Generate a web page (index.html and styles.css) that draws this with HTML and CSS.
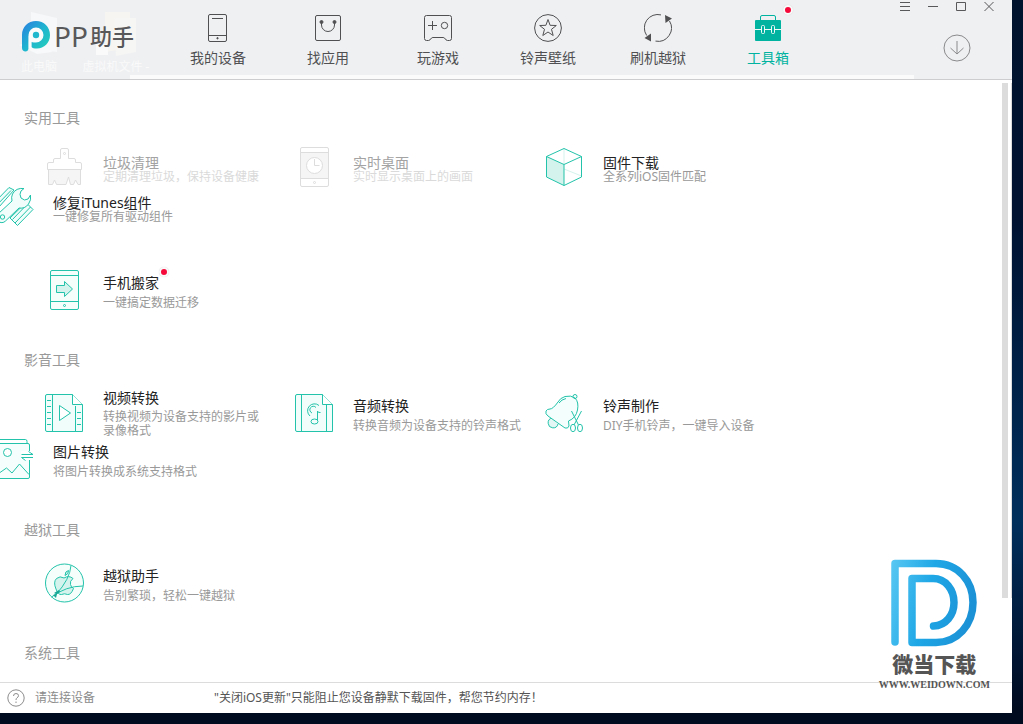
FILE: index.html
```html
<!DOCTYPE html>
<html lang="zh-CN">
<head>
<meta charset="utf-8">
<meta name="viewport" content="width=device-width, initial-scale=1">
<title>PP助手</title>
<link rel="stylesheet" href="styles.css">
</head>
<body>
<div class="window">
  <header class="header">
    <div class="ghost-desktop" aria-hidden="true">
      <div class="ghost-item ghost-computer">
        <svg width="40" height="46" viewBox="0 0 40 46"><path d="M12 0 L38 6 V40 L12 36 Z" fill="#f6f8fa"/><path d="M0 33 L14 28 L34 40 L18 42 Z" fill="#f8f9fa"/></svg>
        <span>此电脑</span>
      </div>
      <div class="ghost-item ghost-files">
        <svg width="40" height="46" viewBox="0 0 40 46"><path d="M9 0 H34 V36 L9 40 Z" fill="#f7f5f1"/><path d="M18 6 H40 V40 L20 44 Z" fill="#f6f6f4"/><path d="M0 32 H12 V43 H0 Z" fill="#fafafa"/></svg>
        <span>虚拟机文件 -</span>
      </div>
      <div class="ghost-strip"></div>
    </div>
    <div class="logo">
      <svg class="logo-mark" width="28" height="31" viewBox="0 0 28 31">
        <defs><linearGradient id="lg" x1="0" y1="0" x2="1" y2="1"><stop offset="0" stop-color="#2a7de0"/><stop offset=".5" stop-color="#1fb4d0"/><stop offset="1" stop-color="#25d3b4"/></linearGradient></defs>
        <circle cx="14" cy="14" r="7.500" fill="#fafcfc"/>
        <path fill="url(#lg)" d="M0 14 C0 6 6 0 14 0 C22 0 28 6 28 14 C28 22 22 27.500 15 27.500 C12 27.500 10.500 27 9.500 26 V21 C11 21.500 12 21.500 14 21.500 A7.500 7.500 0 1 0 6.500 14 V27 C6.500 29.500 5 30.500 3.500 30.500 C1.500 30.500 0 29 0 27 Z"/>
        <path d="M8 15V27" stroke="#fafcfc" stroke-width="2.500"/>
        <circle cx="14" cy="14" r="3.200" fill="#20b8cc"/>
      </svg>
      <span class="logo-pp">PP</span><span class="logo-cn">助手</span>
    </div>
    <nav class="nav">
      <button class="nav-item" type="button">
        <svg class="nav-icon" viewBox="0 0 28 28"><rect x="4.500" y=".5" width="18" height="27" rx="1.500"/><path d="M8 4.500H19M4.500 21.500H22.500"/><circle cx="13.500" cy="24.200" r=".7" fill="currentColor"/></svg>
        <span>我的设备</span>
      </button>
      <button class="nav-item" type="button">
        <svg class="nav-icon" viewBox="0 0 28 28"><rect x="1.500" y="1.500" width="25" height="25" rx="1.500"/><path d="M7.500 8V11a6.500 6.500 0 0 0 13 0V8"/><circle cx="7.500" cy="8" r="1.500" fill="currentColor"/><circle cx="20.500" cy="8" r="1.500" fill="currentColor"/></svg>
        <span>找应用</span>
      </button>
      <button class="nav-item" type="button">
        <svg class="nav-icon" viewBox="0 0 28 28"><path d="M2.500 1.500H25.500Q27.500 1.500 27.500 3.500V24.500Q27.500 26.500 25.500 26.500H23.500Q22 26.500 20.500 24Q20 23.500 19 23.500H9Q8 23.500 7.500 24Q6 26.500 4.500 26.500H2.500Q.5 26.500 .5 24.500V3.500Q.5 1.500 2.500 1.500ZM8.500 7V16M4 11.500H13"/><circle cx="20.500" cy="11.500" r="3.200"/></svg>
        <span>玩游戏</span>
      </button>
      <button class="nav-item" type="button">
        <svg class="nav-icon" viewBox="0 0 28 28"><circle cx="14" cy="14" r="13.400"/><path d="M14 5.500L16.100 11.300L22.300 11.500L17.500 15.300L19.200 21.500L14 18L8.800 21.500L10.500 15.300L5.700 11.500L11.900 11.300Z"/></svg>
        <span>铃声壁纸</span>
      </button>
      <button class="nav-item" type="button">
        <svg class="nav-icon" viewBox="0 0 28 28"><path d="M17 .9A13.400 13.400 0 0 0 2.700 21.500M11.500 27.100A13.400 13.400 0 0 0 25.500 7"/><path d="M21 1L28 4.500L21.500 9ZM.5 24L7 19.500V27.500Z" fill="currentColor" stroke="none"/></svg>
        <span>刷机越狱</span>
      </button>
      <button class="nav-item nav-item-active" type="button">
        <svg class="nav-icon" viewBox="0 0 28 28"><path d="M6.500 7V3Q6.500 1.500 8 1.500H20Q21.500 1.500 21.500 3V7"/><rect x="1" y="6" width="26" height="21" rx="1" fill="currentColor" stroke="none"/><g stroke="#f0f8f7"><path d="M1 15.500H7.500M10.500 15.500H17.500M20.500 15.500H27"/><rect x="7.500" y="11.500" width="3" height="8" rx="1"/><rect x="17.500" y="11.500" width="3" height="8" rx="1"/></g></svg>
        <span>工具箱</span>
        <i class="dot nav-dot"></i>
      </button>
    </nav>
    <div class="header-side">
      <div class="window-controls">
        <button type="button" aria-label="菜单"><svg viewBox="0 0 14 14"><path d="M2 2.500H12M2 6.500H12M2 10.500H12"/></svg></button>
        <button type="button" aria-label="最小化"><svg viewBox="0 0 14 14"><path d="M2 6.500H12"/></svg></button>
        <button type="button" aria-label="最大化"><svg viewBox="0 0 14 14"><path d="M2.500 2.500H11.500V10.500H2.500Z"/></svg></button>
        <button type="button" aria-label="关闭"><svg viewBox="0 0 14 14"><path d="M2.500 2L11.500 11M11.500 2L2.500 11"/></svg></button>
      </div>
      <button class="download" type="button" aria-label="下载"><svg viewBox="0 0 28 28"><circle cx="14" cy="14" r="13"/><path d="M14 7V20M7.500 14L14 20L20.500 14"/></svg></button>
    </div>
  </header>

  <main class="main">
    <div class="sections">
      <section>
        <h2>实用工具</h2>
        <div class="tools">
          <button class="tool tool-compact" type="button" disabled>
            <svg class="tool-icon gray" viewBox="0 0 40 40"><path d="M4.500 22V37.500H8.500L10.500 33L12.500 37.500H22L24.500 30L26.500 37.500H29.500L31.500 33L34 37.500H36.500V22Z" fill="#f5f5f5"/><path d="M3.500 22.500V17Q3.500 15.500 5 15.500H9.500V13Q9.500 11.500 11 11.500H16.500V3Q16.500 1.500 18 1.500H23Q24.500 1.500 24.500 3V11.500H30Q31.500 11.500 31.500 13V15.500H36Q37.500 15.500 37.500 17V22.500Z" fill="#fff"/><circle cx="20.500" cy="6.500" r="1"/></svg>
            <span class="tool-text"><span class="tool-name">垃圾清理</span><span class="tool-desc">定期清理垃圾，保持设备健康</span></span>
          </button>
          <button class="tool tool-compact" type="button" disabled>
            <svg class="tool-icon gray" viewBox="0 0 40 40"><rect x="6.500" y=".5" width="28" height="39" rx="1.500" fill="#fff"/><path d="M6.500 5.500H34.500V31.500H6.500Z" fill="#f5f5f5"/><circle cx="20.500" cy="18.500" r="8" fill="#fff"/><path d="M20.500 12V18.500H25.500"/><circle cx="20.500" cy="35.500" r="1"/></svg>
            <span class="tool-text"><span class="tool-name">实时桌面</span><span class="tool-desc">实时显示桌面上的画面</span></span>
          </button>
          <button class="tool tool-compact" type="button">
            <svg class="tool-icon" viewBox="0 0 40 40"><path d="M2.500 9.500L20 17.500V38.500L2.500 30Z" fill="#d4f3ec" stroke="none"/><path d="M20 1.500V17M20 22L37.500 29" stroke="#d4f3ec"/><path d="M2.500 9.500L20 1.500L37.500 9.500V30L20 38.500L2.500 30ZL20 17.500V38.500M20 17.500L37.500 9.500"/></svg>
            <span class="tool-text"><span class="tool-name">固件下载</span><span class="tool-desc">全系列iOS固件匹配</span></span>
          </button>
          <button class="tool tool-compact tool-outdent" type="button">
            <svg class="tool-icon" viewBox="0 0 40 40"><path d="M-1 17L15 .5L20 3L5 20M-1 22L17 3.500" fill="#f1fdfa"/><path d="M34 17.500L39 22.500L23.500 38.500L16 31L30.500 17" fill="#f1fdfa"/><path d="M36.500 20L21 36M31 19.500L18.500 32.500"/><path d="M30 1.500Q22 .5 18.500 7Q17 10 18 14L4 27A5 5 0 1 0 11.500 34L25 21Q31 22 34.500 17Q37.500 13 36.500 8L34 12Q30.500 14.500 27 11Q25 7 27 4Z" fill="#f1fdfa"/><circle cx="8.500" cy="30" r="2.200"/></svg>
            <span class="tool-text"><span class="tool-name">修复iTunes组件</span><span class="tool-desc">一键修复所有驱动组件</span></span>
          </button>
          <button class="tool tool-separate" type="button">
            <svg class="tool-icon" viewBox="0 0 40 40"><rect x="6.500" y=".5" width="28" height="39" rx="1.500" fill="#f6fefc"/><path d="M6.500 5.500H34.500M6.500 31.500H34.500"/><path d="M12.500 15.500H20.500V11.500L28.500 19L20.500 26.500V22.500H12.500Z" fill="#d4f3ec"/><circle cx="20.500" cy="35.500" r="1"/></svg>
            <span class="tool-text"><span class="tool-name">手机搬家<i class="dot name-dot"></i></span><span class="tool-desc">一键搞定数据迁移</span></span>
          </button>
        </div>
      </section>
      <section>
        <h2>影音工具</h2>
        <div class="tools">
          <button class="tool tool-wrapped" type="button">
            <svg class="tool-icon" viewBox="0 0 40 40"><path d="M3 1.500H28.500L38.500 11.500V38.500H3Q1.500 38.500 1.500 37V3Q1.500 1.500 3 1.500Z" fill="#f1fdfa"/><path d="M28.500 1.500V11.500H38.500" fill="#fff"/><path d="M8.500 1.500V38.500M31.500 13V38.500M3 7.500H7M3 13.500H7M3 19.500H7M3 25.500H7M3 31.500H7M33 19.500H37M33 25.500H37M33 31.500H37"/><path d="M15.500 12.500V27.500L26.500 20Z" fill="#fff"/></svg>
            <span class="tool-text"><span class="tool-name">视频转换</span><span class="tool-desc">转换视频为设备支持的影片或录像格式</span></span>
          </button>
          <button class="tool" type="button">
            <svg class="tool-icon" viewBox="0 0 40 40"><path d="M3 1.500H28.500L38.500 11.500V38.500H3Q1.500 38.500 1.500 37V3Q1.500 1.500 3 1.500Z" fill="#f1fdfa"/><path d="M28.500 1.500V11.500H38.500" fill="#fff"/><path d="M7.500 1.500V38.500M32.500 12V38.500"/><path d="M16 23A6.500 6.500 0 1 1 25 12.500M18 20A3.500 3.500 0 1 1 22 14.500M23.500 28V18Q24 20 26.500 19.500"/><ellipse cx="20.500" cy="28.500" rx="3.500" ry="2.500"/></svg>
            <span class="tool-text"><span class="tool-name">音频转换</span><span class="tool-desc">转换音频为设备支持的铃声格式</span></span>
          </button>
          <button class="tool" type="button">
            <svg class="tool-icon" viewBox="0 0 40 40"><path d="M8 25A5 5 0 1 0 14 31" fill="#e3f8f4"/><path d="M2 18Q1 21 4 23L21 35Q24 36 25 33L24.500 28Q32 25 33.500 17Q35 9 31 5Q27 2 21 3.500Q16 5 14 9Q9 16 6 16Q3 16 2 18Z" fill="#f4fefc"/><circle cx="31" cy="3.500" r="2"/><path d="M15 10Q17.500 6.500 22 5.500M27.500 18L34.500 32M37.500 18L30 32"/><ellipse cx="29" cy="35" rx="2.500" ry="3.700" fill="#fff"/><ellipse cx="36" cy="35" rx="2.500" ry="3.700" fill="#fff"/></svg>
            <span class="tool-text"><span class="tool-name">铃声制作</span><span class="tool-desc">DIY手机铃声，一键导入设备</span></span>
          </button>
          <button class="tool tool-outdent" type="button">
            <svg class="tool-icon" viewBox="0 0 40 40"><path d="M0 4.500H34Q35.500 4.500 35.500 6V38Q35.500 39.500 34 39.500H0" fill="#f5fefc"/><path d="M0 .5H31.500Q33 .5 33 2.500V4.500"/><circle cx="13.500" cy="13.500" r="4" fill="#fff"/><path d="M1 37L12.500 29L18 34L25.500 25L35 35.500"/><path d="M27 12H41V21H27Z" fill="#fff" stroke="none"/><path d="M27.500 15.500H39L34.500 12.500M39 18.500H27.500L31.500 21.500"/></svg>
            <span class="tool-text"><span class="tool-name">图片转换</span><span class="tool-desc">将图片转换成系统支持格式</span></span>
          </button>
        </div>
      </section>
      <section>
        <h2>越狱工具</h2>
        <div class="tools">
          <button class="tool" type="button">
            <svg class="tool-icon" viewBox="0 0 40 40"><circle cx="20.500" cy="20" r="19" fill="#f6fefc"/><path d="M20 15Q25 12 29 15.500Q25.500 18 26.500 21.500Q27 24 29.500 25.500Q27 32 23.500 31.500Q20.500 30 17.500 31.500Q14 32 12 26Q9 19 12.500 15.500Q16 12.500 20 15ZM21 12.500Q21 8 24.500 7.500Q25 11 21 12.500Z" fill="#d4f3ec"/><path d="M27 2.500Q26 16 12 31.500M39 23Q22 23 7.500 34"/><path d="M15 27L10 30L12 31L9 32L12 35L13 31L16 29Z" fill="#16a795" stroke="none"/></svg>
            <span class="tool-text"><span class="tool-name">越狱助手</span><span class="tool-desc">告别繁琐，轻松一键越狱</span></span>
          </button>
        </div>
      </section>
      <section>
        <h2>系统工具</h2>
      </section>
    </div>
    <div class="scrollbar" aria-hidden="true"><div class="thumb"></div><div class="edge"></div></div>
  </main>

  <footer class="footer">
    <div class="status">
      <svg width="18" height="18" viewBox="0 0 18 18" fill="none" stroke="#8c8c8c"><circle cx="9" cy="9" r="8.200"/><path d="M6.500 7Q6.500 4.500 9 4.500Q11.500 4.500 11.500 6.700Q11.500 8 10 8.800Q9 9.500 9 11M9 12.500V14"/></svg>
      <span>请连接设备</span>
    </div>
    <p class="tip">"关闭iOS更新"只能阻止您设备静默下载固件，帮您节约内存！</p>
  </footer>
</div>

<div class="watermark">
  <svg width="88" height="88" viewBox="0 0 88 88" fill="none" stroke="url(#wm)" stroke-width="7.500" stroke-linecap="round" stroke-linejoin="round">
    <defs><linearGradient id="wm" gradientUnits="userSpaceOnUse" x1="0" y1="0" x2="88" y2="20"><stop offset="0" stop-color="#5bc9f3"/><stop offset=".5" stop-color="#1ea7e6"/><stop offset="1" stop-color="#1c92d6"/></linearGradient></defs>
    <path d="M5 83V4.500H46C68 4.500 83 22 83 43.500C83 66 67 83.500 46 83.500H22V19.500H43C56 19.500 64 31 64 43.500C64 56 56 66.500 43.500 67"/>
  </svg>
  <strong>微当下载</strong>
  <span>WWW.WEIDOWN.COM</span>
</div>
</body>
</html>
```

FILE: styles.css
```css
* {
  box-sizing: border-box;
}

body {
  position: relative;
  display: flex;
  min-height: 100vh;
  margin: 0;
  padding: 0 11px 11px 0;
  overflow-x: hidden;
  background: linear-gradient(#00132e 0%, #001230 30%, #002f5c 72%, #00132f 92%, #000b1f 98%);
  color: #222;
  font: 12px/14px "Noto Sans", "Noto Sans CJK SC", sans-serif;
}

button {
  margin: 0;
  padding: 0;
  border: 0;
  background: none;
  color: inherit;
  font: inherit;
}

svg {
  display: block;
  flex: none;
}

.window {
  display: flex;
  flex: 1;
  flex-direction: column;
  min-width: 0;
  background: #fff;
}

/* Header */
.header {
  position: relative;
  display: flex;
  height: 80px;
  border-bottom: 1px solid #cdcdcf;
  background: #eff0f2;
}

.ghost-desktop {
  position: absolute;
  inset: 0;
  overflow: hidden;
}

.ghost-item {
  position: absolute;
  top: 12px;
  display: flex;
  flex-direction: column;
  align-items: center;
  gap: 2px;
  width: 80px;
  color: #fafafa;
  white-space: nowrap;
}

.ghost-computer {
  left: -1px;
}

.ghost-files {
  left: 76px;
}

.ghost-strip {
  position: absolute;
  right: 98px;
  bottom: 0;
  left: 130px;
  height: 4px;
  background: #fbfbfb;
}

.logo {
  position: relative;
  display: flex;
  flex: none;
  align-items: center;
  width: 163px;
  height: 72px;
  padding-left: 22px;
  color: #58585a;
  line-height: 32px;
}

.logo-mark {
  margin-right: 4px;
}

.logo-pp {
  margin-right: 2px;
  font-size: 28px;
}

.logo-cn {
  font-size: 22px;
  font-weight: 500;
}

.nav {
  position: relative;
  display: flex;
}

.nav-item {
  position: relative;
  display: flex;
  flex-direction: column;
  align-items: center;
  gap: 6px;
  width: 110px;
  padding-top: 14px;
  color: #505052;
  font-size: 14px;
  line-height: 20px;
}

.nav-item-active {
  color: #00b3a0;
}

.nav-icon {
  width: 28px;
  height: 28px;
  fill: none;
  stroke: currentColor;
}

.dot {
  position: absolute;
  width: 10px;
  height: 10px;
  border: 2px solid #fafafa;
  border-radius: 50%;
  background: #f5093a;
  box-shadow: 0 0 1px #ccc;
}

.nav-dot {
  top: 5px;
  right: 30px;
}

.header-side {
  position: relative;
  display: flex;
  flex-direction: column;
  align-items: flex-end;
  gap: 20px;
  margin-left: auto;
  fill: none;
  stroke: #58585a;
}

.window-controls {
  display: flex;
  padding-right: 9px;
}

.window-controls button {
  display: flex;
  justify-content: center;
  width: 28px;
}

.window-controls svg {
  width: 14px;
  height: 14px;
}

.download {
  margin-right: 41px;
  stroke: #8a8a8c;
}

.download svg {
  width: 28px;
  height: 28px;
}

/* Tool sections */
.main {
  display: flex;
  flex: 1;
}

.sections {
  display: flex;
  flex: 1;
  flex-direction: column;
  gap: 36px;
  min-width: 0;
  padding: 28px 24px 18px;
}

h2 {
  margin: 0;
  color: #999;
  font-size: 14px;
  font-weight: 400;
  line-height: 20px;
}

.tools {
  display: grid;
  grid-template-columns: repeat(3, 250px);
  margin: 19px 0 0 20px;
}

.tool {
  display: flex;
  align-items: center;
  gap: 19px;
  height: 48px;
  text-align: left;
}

.tool-icon {
  width: 40px;
  height: 40px;
  overflow: visible;
  fill: none;
  stroke: #22c3aa;
}

.tool-icon.gray {
  stroke: #ddd;
}

.tool-text {
  display: flex;
  flex-direction: column;
  gap: 4px;
  padding-top: 3px;
}

.tool-name {
  position: relative;
  align-self: flex-start;
  font-size: 14px;
  line-height: 18px;
}

.tool-desc {
  color: #999;
}

.tool-wrapped .tool-text {
  gap: 3px;
  width: 160px;
  padding-top: 0;
}

.tool-outdent {
  height: 47px;
  margin-left: -50px;
  padding-bottom: 3px;
}

.tool-compact {
  height: 40px;
  padding-bottom: 0;
}

.tool-compact .tool-text {
  gap: 0;
  padding-top: 5px;
}

.tool-compact .tool-name {
  line-height: 14px;
}

.tool-separate {
  grid-column: 1;
  margin-top: 39px;
}

.tool:disabled .tool-name {
  color: #a3a3a3;
}

.tool:disabled .tool-desc {
  color: #dadada;
}

.name-dot {
  top: -7px;
  right: -10px;
}

.scrollbar {
  display: flex;
  gap: 3px;
  padding-top: 3px;
}

.thumb {
  width: 6px;
  height: 86%;
  background: #dcdcdc;
}

.edge {
  width: 1px;
  height: 86%;
  background: #dcdcdc;
}

/* Status bar */
.footer {
  display: flex;
  align-items: center;
  height: 31px;
  border-top: 1px solid #dcdcdc;
}

.status {
  display: flex;
  flex: none;
  align-items: center;
  gap: 10px;
  width: 214px;
  padding-left: 7px;
  color: #8c8c8c;
}

.tip {
  margin: 0;
  color: #555;
}

/* Watermark */
.watermark {
  position: absolute;
  right: 33px;
  bottom: 32px;
  display: flex;
  flex-direction: column;
  align-items: center;
  color: #555;
}

.watermark strong {
  margin-top: 3px;
  font-size: 21px;
  font-weight: 900;
  line-height: 28px;
}

.watermark span {
  font: bold 10px/14px "Liberation Serif", serif;
}
```
